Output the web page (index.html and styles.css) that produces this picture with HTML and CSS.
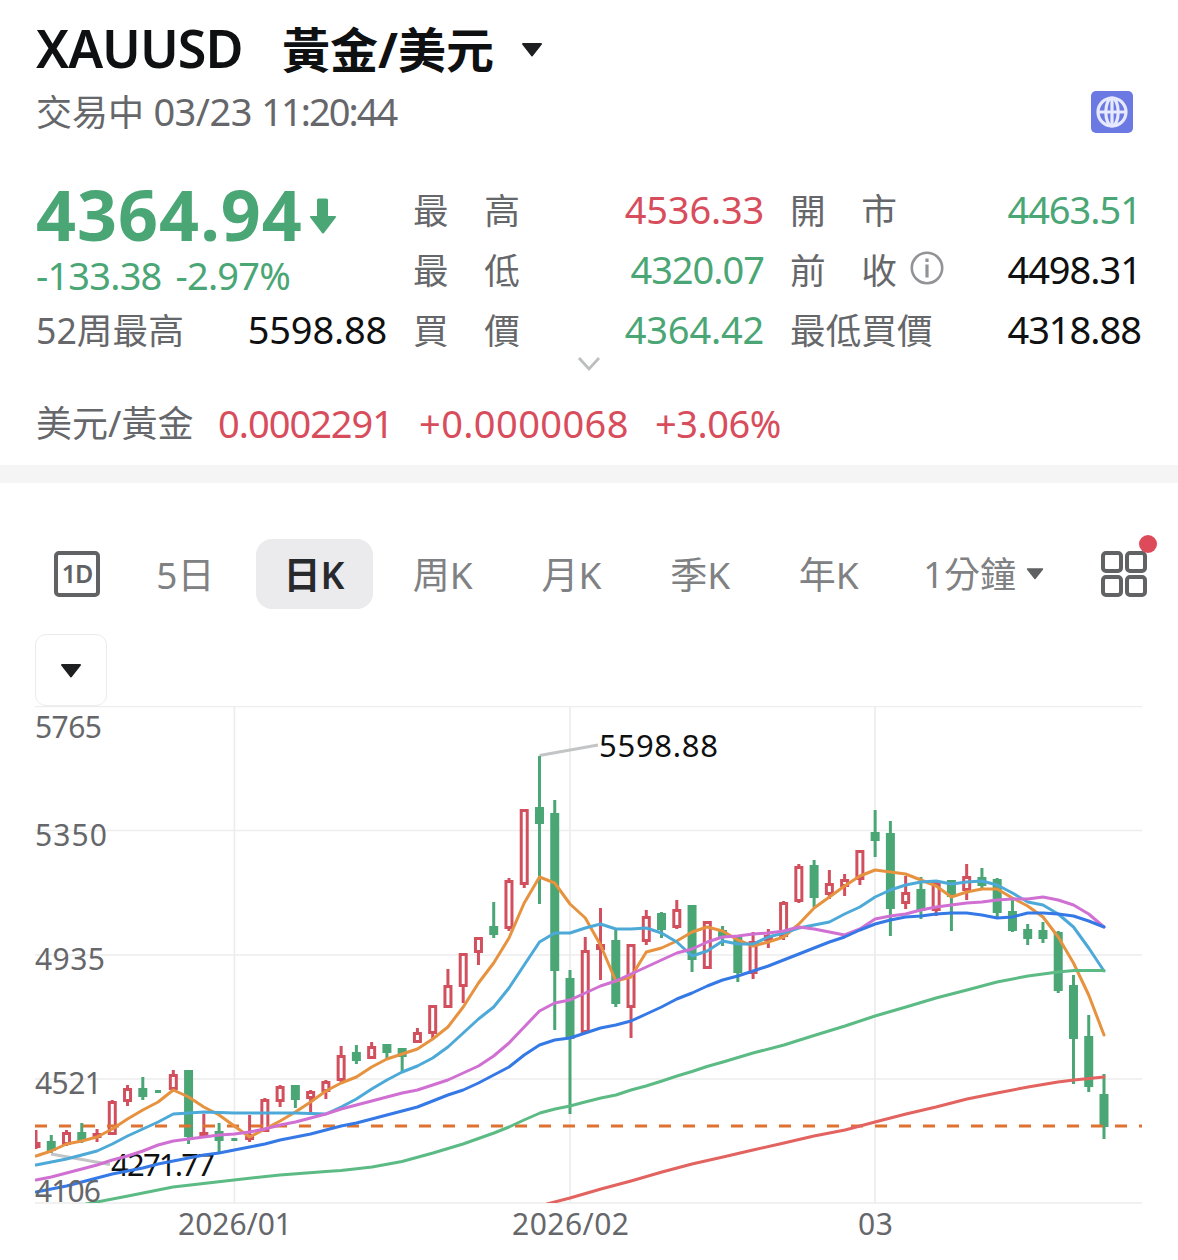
FILE: index.html
```html
<!DOCTYPE html>
<html lang="zh-Hant">
<head>
    <meta charset="UTF-8">
    <meta name="viewport" content="width=device-width, initial-scale=1.0">
    <title>XAUUSD 黃金/美元</title>
    <link rel="stylesheet" href="styles.css">
</head>
<body>

<header class="header">
    <h1 class="title">
        <span class="symbol">XAUUSD</span>
        <span class="pair">黃金/美元</span>
        <svg class="title-arrow" width="22" height="14" viewBox="0 0 22 14"><path d="M2 1h18l-9 11.5z" fill="#1d1f21" stroke="#1d1f21" stroke-width="2" stroke-linejoin="round"/></svg>
    </h1>
    <div class="status-row">
        <div class="status">交易中 <span class="date">03/23</span> <span class="time">11:20:44</span></div>
        <svg class="globe" width="42" height="42" viewBox="0 0 42 42">
            <rect width="42" height="42" rx="5" fill="#6a7ae2"/>
            <g fill="none" stroke="#e6e9ff" stroke-width="3.2">
                <circle cx="21" cy="21" r="14"/>
                <ellipse cx="21" cy="21" rx="6.2" ry="14"/>
                <path d="M21 7v28M7 21h28"/>
            </g>
        </svg>
    </div>
</header>

<section class="quote">
    <div class="col">
        <div class="price green">
            <span>4364.94</span>
            <svg width="28" height="38" viewBox="0 0 28 38"><path d="M9.5 1.5h8a1.5 1.5 0 0 1 1.5 1.5v16h7q2 0 .8 1.500L15 36q-1 1-2 0L1.200 20.500Q0 19 2 19h6V3a1.500 1.500 0 0 1 1.500-1.500z" fill="#4ba676"/></svg>
        </div>
        <div class="change green"><span>-133.38</span><span>-2.97%</span></div>
        <div class="stat"><span class="label">52周最高</span><span class="value">5598.88</span></div>
    </div>
    <div class="col">
        <div class="stat"><span class="label">最　高</span><span class="value red">4536.33</span></div>
        <div class="stat"><span class="label">最　低</span><span class="value green tight">4320.07</span></div>
        <div class="stat"><span class="label">買　價</span><span class="value green">4364.42</span></div>
    </div>
    <div class="col">
        <div class="stat"><span class="label">開　市</span><span class="value green tight">4463.51</span></div>
        <div class="stat">
            <span class="label">前　收</span>
            <svg class="info" width="34" height="34" viewBox="0 0 34 34"><circle cx="17" cy="17" r="15.200" fill="none" stroke="#929396" stroke-width="2.600"/><path d="M17 13.500v13M17 7.500v3.600" stroke="#929396" stroke-width="3.200"/></svg>
            <span class="value tight">4498.31</span>
        </div>
        <div class="stat"><span class="label">最低買價</span><span class="value tight">4318.88</span></div>
    </div>
</section>

<div class="expand">
    <svg width="24" height="16" viewBox="0 0 24 16"><path d="M2 2l10 11L22 2" fill="none" stroke="#bdbebf" stroke-width="2.800"/></svg>
</div>

<div class="inverse">
    <span class="inverse-name">美元/黃金</span>
    <span class="inverse-price red">0.0002291</span>
    <span class="inverse-change red">+0.0000068</span>
    <span class="inverse-percent red">+3.06%</span>
</div>

<div class="divider"></div>

<nav class="tabs">
    <div class="tab-day"><span>1D</span></div>
    <div class="tab">5日</div>
    <div class="tab active"><span>日K</span></div>
    <div class="tab">周K</div>
    <div class="tab">月K</div>
    <div class="tab">季K</div>
    <div class="tab">年K</div>
    <div class="tab tab-minute">
        <span>1分鐘</span>
        <svg width="18" height="12" viewBox="0 0 18 12"><path d="M1.500 1h15L9 10.500z" fill="#5f6062" stroke="#5f6062" stroke-width="1.500" stroke-linejoin="round"/></svg>
    </div>
    <div class="layout-button">
        <svg width="46" height="46" viewBox="0 0 46 46">
            <g fill="none" stroke="#616264" stroke-width="4">
                <rect x="2" y="2" width="18" height="18" rx="3"/>
                <rect x="26" y="2" width="18" height="18" rx="3"/>
                <rect x="2" y="26" width="18" height="18" rx="3"/>
                <rect x="26" y="26" width="18" height="18" rx="3"/>
            </g>
        </svg>
        <i class="dot"></i>
    </div>
</nav>

<button type="button" class="dropdown">
    <svg width="22" height="14" viewBox="0 0 22 14"><path d="M2 1h18l-9 11.500z" fill="#1d1f21" stroke="#1d1f21" stroke-width="2" stroke-linejoin="round"/></svg>
</button>

<svg class="chart" id="chart" width="1178" height="554" viewBox="0 706 1178 554"></svg>

<script src="chart.js"></script>
</body>
</html>
```
FILE: styles.css
```css
body {
    margin: 0;
    width: 1178px;
    height: 1260px;
    overflow: hidden;
    background: #fff;
    color: #0f1011;
    font-family: "Noto Sans", "Noto Sans CJK TC", sans-serif;
    font-size: 38px;
}

.green {
    color: #4ba676;
}

.red {
    color: #d84d5c;
}

.header {
    padding: 20px 45px 0 36px;
}

.title {
    display: flex;
    align-items: center;
    height: 60px;
    margin: 0;
    font-size: 52px;
    line-height: 60px;
    white-space: nowrap;
}

.symbol {
    width: 246px;
    padding-bottom: 4px;
    font-weight: 600;
    letter-spacing: -1px;
}

.pair {
    width: 239px;
    font-size: 48px;
}

.title-arrow {
    margin-bottom: 1px;
}

.status-row {
    display: flex;
    justify-content: space-between;
    height: 64px;
    padding-top: 11px;
    box-sizing: border-box;
}

.status {
    margin-top: -2px;
    color: #66676a;
    font-size: 36px;
    line-height: 44px;
    white-space: nowrap;
}

.date,
.time {
    font-size: 38px;
}

.date {
    letter-spacing: -0.5px;
}

.time {
    letter-spacing: -2px;
}

.quote {
    display: grid;
    grid-template-columns: 351px 351px 351px;
    column-gap: 26px;
    height: 206px;
    padding: 36px 36px 0;
    box-sizing: border-box;
}

.stat {
    display: flex;
    align-items: center;
    height: 60px;
    line-height: 60px;
    white-space: nowrap;
}

.label {
    color: #66676a;
    font-size: 35.7px;
}

.value {
    margin-left: auto;
    padding-bottom: 3px;
    letter-spacing: -0.2px;
}

.tight {
    letter-spacing: -1px;
}

.info {
    margin-left: 13px;
    margin-bottom: 4px;
}

.price {
    display: flex;
    align-items: center;
    height: 72px;
    font-size: 70px;
    font-weight: 700;
    line-height: 68px;
    letter-spacing: 1px;
}

.price span {
    width: 273px;
    padding-bottom: 4px;
}

.change {
    display: flex;
    gap: 14px;
    height: 48px;
    line-height: 46px;
    letter-spacing: -0.8px;
}

.expand {
    display: flex;
    justify-content: center;
    height: 24px;
    padding-top: 6px;
    box-sizing: border-box;
}

.inverse {
    display: flex;
    height: 91px;
    padding: 19px 0 0 36px;
    box-sizing: border-box;
    line-height: 60px;
    white-space: nowrap;
}

.inverse-name {
    width: 182px;
    padding-top: 1px;
    color: #66676a;
    font-size: 36px;
}

.inverse-price {
    width: 201px;
    letter-spacing: -1px;
}

.inverse-change {
    width: 236px;
    letter-spacing: 0.4px;
}

.inverse-percent {
    letter-spacing: -0.5px;
}

.divider {
    height: 18px;
    background: #f5f5f5;
}

.tabs {
    display: flex;
    align-items: center;
    height: 151px;
    padding: 31px 31px 0 54px;
    box-sizing: border-box;
    color: #808183;
    white-space: nowrap;
}

.tab-day {
    display: flex;
    align-items: center;
    justify-content: center;
    width: 46px;
    height: 46px;
    margin-right: 21px;
    padding-bottom: 2px;
    border: 4px solid #616264;
    border-radius: 5px;
    box-sizing: border-box;
    color: #616264;
    font-size: 25px;
    font-weight: 600;
    letter-spacing: -1px;
}

.tab {
    display: flex;
    align-items: center;
    justify-content: center;
    width: 128.7px;
    height: 70px;
    padding-bottom: 3px;
    box-sizing: border-box;
    font-size: 37px;
}

.active {
    padding-bottom: 0;
}

.active span {
    width: 117px;
    height: 70px;
    border-radius: 16px;
    background: #ebebed;
    color: #27292c;
    font-weight: 600;
    line-height: 71px;
    text-align: center;
}

.tab-minute {
    gap: 10px;
    width: 181px;
    font-size: 36px;
}

.tab-minute svg {
    margin-top: 3px;
}

.layout-button {
    position: relative;
    width: 46px;
    height: 46px;
    margin-left: auto;
}

.layout-button svg {
    display: block;
}

.dot {
    position: absolute;
    top: -16px;
    right: -10px;
    width: 18px;
    height: 18px;
    border-radius: 50%;
    background: #dd4a5a;
}

.dropdown {
    display: flex;
    align-items: center;
    justify-content: center;
    width: 72px;
    height: 72px;
    margin-left: 35px;
    padding: 2px 0 0;
    border: 1.5px solid #ececec;
    border-radius: 11px;
    background: #fff;
}

.chart {
    display: block;
    font-size: 30px;
}

.axis {
    fill: #66676a;
}

.mark {
    fill: #0f1011;
}
```
FILE: chart.js
```js
const chart = document.getElementById('chart');
const left = 36;
const step = 15.257;
const x = i => left + i * step;

const red = '#d24f5e';
const green = '#4ba676';

// direction, high, body top, body bottom, low
const candles = [
    ['r', 1130, 1142, 1148, 1149], ['g', 1135, 1141, 1151, 1153], ['r', 1130, 1132, 1145, 1146],
    ['g', 1123, 1132, 1141, 1143], ['r', 1129, 1133, 1138, 1142], ['r', 1100, 1101, 1135, 1135],
    ['r', 1085, 1088, 1102, 1106], ['g', 1077, 1088, 1097, 1100], ['d', 1090, 1090, 1093, 1093],
    ['r', 1070, 1074, 1090, 1091], ['g', 1070, 1070, 1137, 1144], ['r', 1114, 1132, 1137, 1137],
    ['g', 1123, 1131, 1141, 1152], ['d', 1138, 1138, 1141, 1141], ['r', 1115, 1134, 1140, 1142],
    ['r', 1098, 1099, 1132, 1132], ['r', 1085, 1086, 1102, 1107], ['g', 1085, 1085, 1100, 1108],
    ['r', 1090, 1091, 1099, 1112], ['r', 1080, 1081, 1092, 1099], ['r', 1046, 1055, 1081, 1082],
    ['g', 1045, 1052, 1061, 1064], ['r', 1042, 1046, 1059, 1059], ['g', 1044, 1044, 1053, 1060],
    ['g', 1048, 1048, 1057, 1073], ['r', 1028, 1032, 1043, 1043], ['r', 1005, 1005, 1034, 1038],
    ['r', 969, 985, 1008, 1008], ['r', 953, 953, 987, 1003], ['r', 937, 937, 953, 965],
    ['g', 902, 926, 935, 938], ['r', 878, 880, 929, 931], ['r', 809, 809, 885, 888],
    ['g', 756, 807, 824, 904], ['g', 800, 813, 971, 1030], ['g', 970, 978, 1039, 1114],
    ['r', 937, 950, 1033, 1033], ['r', 908, 944, 950, 980], ['g', 929, 940, 1004, 1007],
    ['r', 944, 944, 1008, 1038], ['r', 910, 916, 942, 945], ['g', 912, 913, 930, 938],
    ['r', 900, 909, 928, 929], ['g', 905, 905, 960, 972], ['r', 921, 921, 969, 969],
    ['g', 926, 930, 938, 946], ['g', 936, 937, 973, 982], ['r', 932, 941, 974, 979],
    ['r', 929, 935, 941, 948], ['r', 901, 902, 937, 940], ['r', 864, 866, 902, 903],
    ['g', 860, 865, 898, 907], ['r', 870, 883, 895, 899], ['r', 874, 879, 887, 896],
    ['r', 850, 850, 880, 885], ['g', 810, 832, 841, 857], ['g', 821, 833, 909, 936],
    ['r', 876, 892, 904, 909], ['g', 877, 889, 911, 919], ['r', 882, 882, 911, 916],
    ['g', 880, 880, 897, 931], ['r', 864, 876, 891, 900], ['g', 868, 877, 886, 888],
    ['g', 878, 879, 913, 917], ['g', 898, 911, 931, 932], ['g', 924, 929, 939, 945],
    ['g', 922, 930, 939, 943], ['g', 931, 932, 991, 993], ['g', 975, 985, 1039, 1084],
    ['g', 1015, 1036, 1087, 1092], ['g', 1074, 1094, 1127, 1139]
];

// one value per candle
const averages = [
    ['#e6923f', [1156, 1151, 1144, 1141, 1137, 1129, 1119, 1110, 1102, 1090, 1097, 1107, 1115, 1126, 1137, 1129, 1121, 1112, 1102, 1091, 1083, 1077, 1067, 1059, 1054, 1049, 1039, 1027, 1007, 983, 963, 938, 903, 877, 883, 904, 918, 945, 981, 977, 952, 948, 941, 932, 927, 931, 940, 946, 942, 937, 924, 908, 897, 886, 876, 870, 872, 874, 880, 886, 897, 892, 889, 889, 898, 906, 917, 937, 963, 995, 1035]],
    ['#4da9d8', [1165, 1162, 1159, 1155, 1151, 1144, 1136, 1129, 1122, 1114, 1113, 1112, 1112.5, 1113, 1113, 1113, 1113, 1113, 1113.5, 1114, 1107, 1099, 1089, 1080, 1072, 1066, 1058, 1047, 1033, 1019, 1007, 988, 965, 942, 933, 933, 928, 924, 929, 929, 928, 933, 942, 956, 951, 941, 944, 944, 937, 933, 928, 925, 922, 914, 907, 897, 890, 885, 882, 881, 884, 882, 881, 885, 893, 902, 905, 914, 927, 948, 971]],
    ['#d070d2', [1180, 1177, 1173, 1169, 1165, 1160, 1156, 1151, 1145, 1141, 1139, 1137, 1135, 1134, 1132, 1129, 1125, 1122, 1118, 1114, 1109, 1105, 1101, 1097, 1093, 1090, 1085, 1080, 1073, 1066, 1056, 1043, 1027, 1011, 1003, 1000, 993, 986, 981, 974, 967, 960, 953, 949, 942, 937, 936, 934, 933, 931, 927, 929, 932, 935, 929, 919, 916, 914, 910, 907, 905, 903, 902, 900, 899, 899, 897, 900, 905, 914, 927]],
    ['#3479e6', [1192, 1189, 1186, 1182, 1178, 1174, 1171, 1168, 1164, 1161, 1158, 1155, 1153, 1150, 1147, 1144, 1140, 1137, 1134, 1130, 1126, 1123, 1119, 1115, 1111, 1107, 1101, 1095, 1090, 1083, 1075, 1067, 1055, 1045, 1040, 1038, 1033, 1028, 1025, 1021, 1014, 1007, 999, 993, 986, 980, 976, 971, 966, 960, 954, 948, 942, 937, 930, 924, 920, 917, 916, 914, 913, 913, 915, 918, 917, 913, 913, 914, 916, 921, 927]]
];

// long averages, as x,y points
const longAverages = [
    ['#5cbb84', '86,1204 97,1202 128,1196 173,1187 234,1180 280,1175 326,1171.5 341,1170.5 372,1167 402,1161.5 433,1153 463,1144 494,1133 509,1127 524,1120 540,1113 555,1109 570,1106 585,1102 601,1098 616,1095 631,1090 646,1086 662,1081 677,1076 692,1071.5 707,1066.5 723,1062 753,1053 784,1045 814,1035.5 845,1026 875,1016 906,1007 936,998 967,990 997,982 1028,976 1058,972 1074,970.5 1104,970.5'],
    ['#e2635f', '547,1204 570,1198 601,1189 631,1181 662,1172 692,1164 723,1157 753,1150 784,1143 814,1136 845,1130 875,1122 906,1114 936,1107 967,1099 997,1093 1028,1087 1058,1082 1074,1080 1104,1077']
];

let svg = '<defs><clipPath id="plot"><rect x="35" y="706" width="1107" height="497"/></clipPath></defs>';

// grid
[706.5, 830.5, 955, 1079, 1203].forEach(y => {
    svg += `<path d="M35 ${y}H1142" stroke="#ededed" stroke-width="1.7"/>`;
});
[234.4, 570, 875].forEach(gx => {
    svg += `<path d="M${gx} 706V1203" stroke="#ededed" stroke-width="1.7"/>`;
});

// callouts
svg += '<path d="M539.5 755.5L598 745M51 1154L110 1164.5" stroke="#c3c4c5" stroke-width="3"/>';
svg += '<text class="mark" x="599" y="757" font-size="31" textLength="119">5598.88</text>';
svg += '<text class="mark" x="111" y="1175.5" font-size="31" textLength="104">4271.77</text>';

// candles
svg += '<g clip-path="url(#plot)">';
candles.forEach(([type, high, top, bottom, low], i) => {
    const cx = x(i);
    if (type === 'd') {
        svg += `<rect x="${cx - 3}" y="${top}" width="6" height="3" fill="${green}"/>`;
    } else if (type === 'g') {
        svg += `<rect x="${cx - 1.5}" y="${high}" width="3" height="${low - high}" fill="${green}"/>`;
        svg += `<rect x="${cx - 4.5}" y="${top}" width="9" height="${bottom - top}" fill="${green}"/>`;
    } else {
        svg += `<path d="M${cx} ${high}V${top + 1}M${cx} ${bottom - 1}V${low}" stroke="${red}" stroke-width="3"/>`;
        svg += `<rect x="${cx - 3}" y="${top + 1.5}" width="6" height="${bottom - top - 3}" fill="none" stroke="${red}" stroke-width="3"/>`;
    }
});

// last price
svg += '<path d="M35 1126H1142" stroke="#dd7231" stroke-width="3" stroke-dasharray="12 12"/>';

averages.forEach(([color, ys]) => {
    const points = ys.map((y, i) => `${x(i).toFixed(1)},${y}`).join(' ');
    svg += `<polyline points="${points}" fill="none" stroke="${color}" stroke-width="3" stroke-linejoin="round" stroke-linecap="round"/>`;
});
longAverages.forEach(([color, points]) => {
    svg += `<polyline points="${points}" fill="none" stroke="${color}" stroke-width="3" stroke-linejoin="round" stroke-linecap="round"/>`;
});
svg += '</g>';

// axis labels
[[5765, 738, 67], [5350, 845.5, 72], [4935, 969.5, 70], [4521, 1094, 67], [4106, 1201.5, 66]].forEach(([text, y, w]) => {
    svg += `<text class="axis" x="35" y="${y}" textLength="${w}">${text}</text>`;
});
[['2026/01', 178, 114], ['2026/02', 512, 117], ['03', 858, 35]].forEach(([text, tx, w]) => {
    svg += `<text class="axis" x="${tx}" y="1235" textLength="${w}">${text}</text>`;
});

chart.innerHTML = svg;
```
